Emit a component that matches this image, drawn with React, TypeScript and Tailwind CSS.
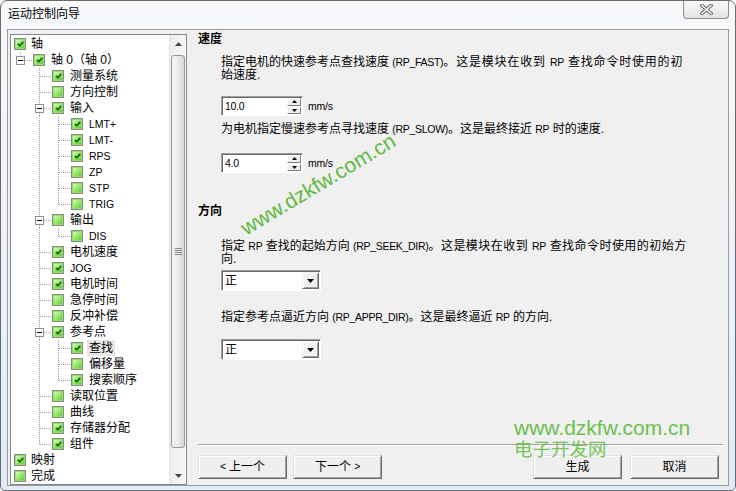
import React from 'react';

type TreeNode = {
  label: string;
  level: number;
  checked: boolean;
  expander?: boolean;
  selected?: boolean;
};

const TREE: TreeNode[] = [
  { label: '轴', level: 0, checked: true },
  { label: '轴 0（轴 0）', level: 1, checked: true, expander: true },
  { label: '测量系统', level: 2, checked: true },
  { label: '方向控制', level: 2, checked: false },
  { label: '输入', level: 2, checked: true, expander: true },
  { label: 'LMT+', level: 3, checked: true },
  { label: 'LMT-', level: 3, checked: true },
  { label: 'RPS', level: 3, checked: true },
  { label: 'ZP', level: 3, checked: false },
  { label: 'STP', level: 3, checked: false },
  { label: 'TRIG', level: 3, checked: false },
  { label: '输出', level: 2, checked: false, expander: true },
  { label: 'DIS', level: 3, checked: false },
  { label: '电机速度', level: 2, checked: true },
  { label: 'JOG', level: 2, checked: true },
  { label: '电机时间', level: 2, checked: true },
  { label: '急停时间', level: 2, checked: false },
  { label: '反冲补偿', level: 2, checked: false },
  { label: '参考点', level: 2, checked: true, expander: true },
  { label: '查找', level: 3, checked: true, selected: true },
  { label: '偏移量', level: 3, checked: false },
  { label: '搜索顺序', level: 3, checked: true },
  { label: '读取位置', level: 2, checked: false },
  { label: '曲线', level: 2, checked: false },
  { label: '存储器分配', level: 2, checked: true },
  { label: '组件', level: 2, checked: true },
  { label: '映射', level: 0, checked: true },
  { label: '完成', level: 0, checked: false },
];

const isLatin = (s: string) => /^[A-Za-z+\-]+$/.test(s);

// does the branch at level k still continue below row i?
function continues(i: number, k: number) {
  for (let j = i + 1; j < TREE.length; j++) {
    if (TREE[j].level < k) return false;
    if (TREE[j].level === k) return true;
  }
  return false;
}

type GuideKind = 'none' | 'pipe' | 'tee' | 'elbow';

function Guide({ kind, own, expander }: { kind: GuideKind; own?: boolean; expander?: boolean }) {
  const w = own ? 21 : 19;
  const dot = { stroke: '#a0a0a0', strokeDasharray: '1 1', shapeRendering: 'crispEdges' as const };
  if (kind === 'none') return <span className="shrink-0" style={{ width: w }} />;
  return (
    <svg width={w} height={16} className="shrink-0">
      {expander ? (
        <>
          <line x1={9.5} y1={0} x2={9.5} y2={4} {...dot} />
          {kind === 'tee' && <line x1={9.5} y1={13} x2={9.5} y2={16} {...dot} />}
          <line x1={14} y1={8.5} x2={w} y2={8.5} {...dot} />
          <rect x={5.5} y={4.5} width={8} height={8} fill="#fff" stroke="#919191" shapeRendering="crispEdges" />
          <rect x={7} y={8} width={5} height={1} fill="#000" />
        </>
      ) : (
        <>
          <line x1={9.5} y1={0} x2={9.5} y2={kind === 'elbow' ? 9 : 16} {...dot} />
          {kind !== 'pipe' && <line x1={10} y1={8.5} x2={w} y2={8.5} {...dot} />}
        </>
      )}
    </svg>
  );
}

function Check({ on }: { on: boolean }) {
  return (
    <span className="w-[12px] h-[12px] shrink-0 flex border border-[#8a8a8a] bg-white">
      <span className="flex-1 flex items-center justify-center border border-[#8fe065] bg-gradient-to-br from-[#d8fbc2] via-[#9ae86c] to-[#62cc37]">
        {on && (
          <svg width="7" height="6" viewBox="0 0 7 6">
            <path d="M0.8 2.8 L2.7 4.7 L6.3 0.9" stroke="#176b19" strokeWidth="1.7" fill="none" />
          </svg>
        )}
      </span>
    </span>
  );
}

function TreeRow({ node, index }: { node: TreeNode; index: number }) {
  const guides: React.ReactNode[] = [];
  for (let k = 1; k <= node.level; k++) {
    const own = k === node.level;
    const more = continues(index, k);
    const kind: GuideKind = own ? (more ? 'tee' : 'elbow') : more ? 'pipe' : 'none';
    guides.push(<Guide key={k} kind={kind} own={own} expander={own && node.expander} />);
  }
  return (
    <div className="h-[16px] flex items-center">
      {node.level === 0 ? <span className="w-[3px] shrink-0" /> : guides}
      {node.level > 0 && <span className="w-[1px] shrink-0" />}
      <Check on={node.checked} />
      <span
        className={
          'leading-[16px] whitespace-nowrap text-black ' +
          (node.selected ? 'ml-[4px] px-[2px] bg-[#e6e6e6] ' : node.level === 0 ? 'ml-[5px] ' : 'ml-[6px] ') +
          (isLatin(node.label) ? 'text-[10.5px]' : 'text-[12px]')
        }
      >
        {node.label}
      </span>
    </div>
  );
}

function Scrollbar() {
  return (
    <div className="w-[17px] shrink-0 flex flex-col bg-gradient-to-r from-[#ececec] to-[#f9f9f9] border-l border-[#e4e4e4]">
      <div className="h-[17px] flex items-center justify-center">
        <svg width="7" height="4"><path d="M3.5 0 L7 4 L0 4 Z" fill="#444" /></svg>
      </div>
      <div className="mt-[3px] mx-[1px] h-[393px] rounded-[3px] border border-[#979797] bg-gradient-to-r from-[#f6f6f6] via-[#ebebeb] to-[#d6d6d6] flex flex-col items-center justify-center gap-[1px]">
        <span className="w-[7px] h-[1px] bg-[#8c8c8c]" />
        <span className="w-[7px] h-[1px] bg-[#8c8c8c]" />
        <span className="w-[7px] h-[1px] bg-[#8c8c8c]" />
        <span className="w-[7px] h-[1px] bg-[#8c8c8c]" />
      </div>
      <div className="flex-1" />
      <div className="h-[17px] flex items-center justify-center">
        <svg width="7" height="4"><path d="M0 0 L7 0 L3.5 4 Z" fill="#444" /></svg>
      </div>
    </div>
  );
}

const L = ({ children }: { children: React.ReactNode }) => (
  <span className="text-[10.5px] tracking-[-0.3px]">{children}</span>
);

function SpinBox({ value }: { value: string }) {
  return (
    <div className="flex items-center">
      <div className="w-[82px] h-[20px] flex border border-t-[#a0a0a0] border-l-[#a0a0a0] border-b-white border-r-white shadow-[inset_1px_1px_0_#696969] bg-white">
        <span className="flex-1 pl-[3px] pt-[1px] text-[12px] leading-[17px]">
          <L>{value}</L>
        </span>
        <div className="w-[15px] flex flex-col gap-[1px] py-[1px] pr-[1px]">
          {[0, 1].map((i) => (
            <div
              key={i}
              className="flex-1 flex items-center justify-center bg-[#f0f0f0] border border-t-white border-l-white border-b-[#808080] border-r-[#808080]"
            >
              <svg width="5" height="3">
                <path d={i === 0 ? 'M2.5 0 L5 3 L0 3 Z' : 'M0 0 L5 0 L2.5 3 Z'} fill="#000" />
              </svg>
            </div>
          ))}
        </div>
      </div>
      <span className="ml-[5px] text-[10.5px] tracking-[-0.2px] leading-[14px]">mm/s</span>
    </div>
  );
}

function Select() {
  return (
    <div className="w-[100px] h-[21px] flex items-center border border-t-[#a0a0a0] border-l-[#a0a0a0] border-b-white border-r-white shadow-[inset_1px_1px_0_#696969] bg-white">
      <span className="flex-1 pl-[3px] text-[12px] leading-[16px]">正</span>
      <div className="w-[17px] h-[17px] mr-[1px] flex items-center justify-center bg-[#f0f0f0] border border-t-[#f0f0f0] border-l-[#f0f0f0] border-b-[#696969] border-r-[#696969] shadow-[inset_1px_1px_0_#fff,inset_-1px_-1px_0_#a0a0a0]">
        <svg width="7" height="4"><path d="M0 0 L7 0 L3.5 4 Z" fill="#000" /></svg>
      </div>
    </div>
  );
}

function Button({ children, className = '' }: { children: React.ReactNode; className?: string }) {
  return (
    <div
      className={
        'w-[89px] h-[24px] flex items-center justify-center text-[12px] bg-[#efefef] border border-t-[#e3e3e3] border-l-[#e3e3e3] border-b-[#696969] border-r-[#696969] shadow-[inset_1px_1px_0_#fff,inset_-1px_-1px_0_#a0a0a0] ' +
        className
      }
    >
      {children}
    </div>
  );
}

export default function App() {
  return (
    <div className="relative w-[736px] h-[491px] flex flex-col overflow-hidden rounded-t-[7px] rounded-b-[5px] border border-[#6c6c6c] bg-gradient-to-b from-[#f7f9fb] to-[#e2ecf6] text-black [font-family:'Liberation_Sans','Noto_Sans_CJK_SC',sans-serif]">
      {/* title bar */}
      <div className="h-[28px] shrink-0 flex items-start">
        <span className="pl-[7px] pt-[5px] text-[12px] leading-[16px]">运动控制向导</span>
        <div className="ml-auto mr-[6px] -mt-[1px] w-[46px] h-[19px] flex items-center justify-center rounded-b-[4px] border border-t-0 border-[#8d8d8d] bg-gradient-to-b from-[#fafafa] to-[#e4e4e4]">
          <svg width="13" height="11" viewBox="0 0 13 11">
            <path d="M2 1.5 L11 9.5 M11 1.5 L2 9.5" stroke="#6f6f6f" strokeWidth="3.6" strokeLinecap="square" />
            <path d="M2 1.5 L11 9.5 M11 1.5 L2 9.5" stroke="#fdfdfd" strokeWidth="1.4" strokeLinecap="square" />
          </svg>
        </div>
      </div>

      {/* client area */}
      <div className="mx-[6px] mb-[6px] flex-1 flex border border-[#9a9a9a] bg-[#f0f0f0]">
        {/* tree */}
        <div className="ml-[2px] mt-[4px] w-[177px] flex border border-[#828790] bg-white overflow-hidden">
          <div className="flex-1 pt-[1px] overflow-hidden">
            {TREE.map((n, i) => (
              <TreeRow key={i} node={n} index={i} />
            ))}
          </div>
          <Scrollbar />
        </div>

        {/* page */}
        <div className="flex-1 flex flex-col pl-[11px] pr-[5px] text-[12px]">
          <div className="mt-[2px] font-bold leading-[14px]">速度</div>
          <div className="mt-[10px] pl-[23px] leading-[13px] whitespace-nowrap">
            <div>
              指定电机的快速参考点查找速度 <L>(RP_FAST)</L>
              <span className="tracking-[0.8px]">
                。这是模块在收到 <L>RP</L> 查找命令时使用的初
              </span>
            </div>
            <div>始速度.</div>
          </div>
          <div className="mt-[14px] pl-[23px]">
            <SpinBox value="10.0" />
          </div>
          <div className="mt-[7px] pl-[23px] leading-[13px] whitespace-nowrap">
            为电机指定慢速参考点寻找速度 <L>(RP_SLOW)</L>。这是最终接近 <L>RP</L> 时的速度.
          </div>
          <div className="mt-[17px] pl-[23px]">
            <SpinBox value="4.0" />
          </div>

          <div className="mt-[31px] font-bold leading-[14px]">方向</div>
          <div className="mt-[22px] pl-[23px] leading-[13px] whitespace-nowrap">
            <div>
              指定 <L>RP</L> 查找的起始方向 <L>(RP_SEEK_DIR)</L>
              <span className="tracking-[0.45px]">
                。这是模块在收到 <L>RP</L> 查找命令时使用的初始方
              </span>
            </div>
            <div>向.</div>
          </div>
          <div className="mt-[4px] pl-[23px]">
            <Select />
          </div>
          <div className="mt-[20px] pl-[23px] leading-[13px] whitespace-nowrap">
            指定参考点逼近方向 <L>(RP_APPR_DIR)</L>。这是最终逼近 <L>RP</L> 的方向.
          </div>
          <div className="mt-[15px] pl-[23px]">
            <Select />
          </div>

          <div className="flex-1" />
          <div className="h-[2px] border-t border-[#a0a0a0] border-b border-b-white" />
          <div className="mt-[9px] mb-[6px] mr-[4px] flex">
            <Button>
              <L>&lt;</L>&nbsp;上一个
            </Button>
            <Button className="ml-[6px]">
              下一个&nbsp;<L>&gt;</L>
            </Button>
            <Button className="ml-auto">生成</Button>
            <Button className="ml-[8px]">取消</Button>
          </div>
        </div>
      </div>

      {/* watermarks */}
      <div className="pointer-events-none absolute inset-0">
        <div className="absolute left-[317px] top-[183px] -translate-x-1/2 -translate-y-1/2 -rotate-[31deg] whitespace-nowrap text-[21px] leading-none text-[#5fb940]">
          www.dzkfw.com.cn
        </div>
        <div className="absolute left-[513px] top-[416px] whitespace-nowrap text-[21px] leading-none text-[#6cbf4f]">
          www.dzkfw.com.cn
        </div>
        <div className="absolute left-[513px] top-[440px] whitespace-nowrap text-[18.5px] leading-none text-[#6cbf4f] opacity-90">
          电子开发网
        </div>
      </div>
    </div>
  );
}
